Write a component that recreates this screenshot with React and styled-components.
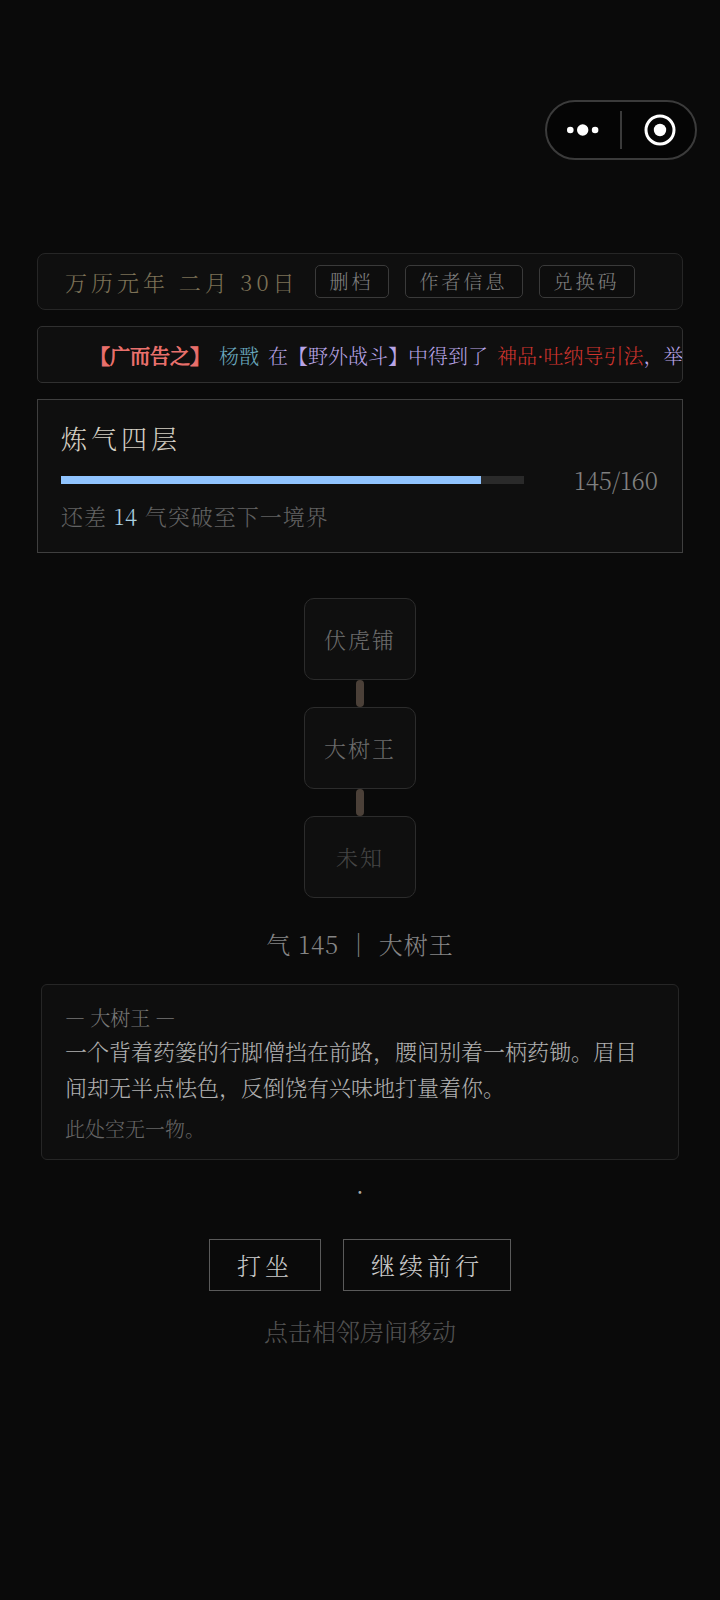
import styled, { createGlobalStyle } from "styled-components";

const GlobalStyle = createGlobalStyle`
  * {
    box-sizing: border-box;
  }

  body {
    margin: 0;
    background: #0a0a0a;
    color: #999;
    font-family: "Noto Serif CJK SC", "Noto Serif SC", "Liberation Serif", "Noto Sans CJK SC", serif;
    font-weight: 300;
  }

  button {
    font: inherit;
    margin: 0;
    cursor: pointer;
  }

  p, h1, h2 {
    margin: 0;
    font-weight: inherit;
  }
`;

const Page = styled.div`
  min-height: 100vh;
  padding: 100px 37px 48px;
  overflow: hidden;
`;

/* 右上角胶囊 */
const Capsule = styled.div`
  display: flex;
  align-items: center;
  width: 152px;
  height: 60px;
  margin: 0 -14px 93px auto;
  border: 2px solid #3b3b3b;
  border-radius: 30px;
  background: #050505;
`;

const CapsuleButton = styled.button`
  flex: 1;
  height: 100%;
  display: flex;
  align-items: center;
  justify-content: center;
  padding: 0;
  border: 0;
  background: none;
`;

const CapsuleLine = styled.span`
  width: 2px;
  height: 38px;
  background: #3b3b3b;
`;

const Panels = styled.div`
  display: flex;
  flex-direction: column;
  gap: 16px;
`;

const TopBar = styled.header`
  display: flex;
  align-items: center;
  gap: 16px;
  padding: 11px 27px;
  border: 1px solid #262626;
  border-radius: 8px;
  background: #0f0f0f;
`;

const GameDate = styled.span`
  font-size: 22px;
  line-height: 32px;
  letter-spacing: 4px;
  white-space: nowrap;
  color: #7d7257;
`;

const SmallButton = styled.button`
  padding: 0 14px 2px;
  border: 1px solid #3a3a3a;
  border-radius: 5px;
  background: #0d0d0d;
  color: #808080;
  font-size: 19px;
  line-height: 29px;
  letter-spacing: 3px;
  white-space: nowrap;
`;

const Notice = styled.div`
  display: flex;
  gap: 9px;
  padding: 13px 0 11px 52px;
  overflow: hidden;
  border: 1px solid #303030;
  border-radius: 5px;
  background: #0f0f0f;
  font-size: 20px;
  line-height: 31px;
  white-space: nowrap;
`;

const NoticeText = styled.span`
  flex-shrink: 0;
  color: ${({ $color }) => $color};
  -webkit-text-stroke: ${({ $bold }) => ($bold ? "1px" : "0")};
`;

const LevelCard = styled.section`
  padding: 22px 24px 22px 23px;
  border: 1px solid #3f3f3f;
  background: #0f0f0f;
`;

const LevelName = styled.h1`
  font-size: 26px;
  line-height: 32px;
  letter-spacing: 4px;
  color: #d4cfc4;
`;

const QiRow = styled.div`
  display: flex;
  align-items: center;
  margin-top: 12px;
`;

const Track = styled.div`
  flex: 1;
  height: 8px;
  background: #2a2a2a;
`;

const Fill = styled.div`
  height: 100%;
  background: #90c4ff;
`;

const QiCount = styled.span`
  min-width: 134px;
  text-align: right;
  font-size: 24px;
  line-height: 28px;
  color: #808080;
`;

const LevelHint = styled.p`
  margin-top: 8px;
  font-size: 22px;
  line-height: 28px;
  letter-spacing: 1px;
  color: #626262;

  b {
    font-weight: 300;
    color: #a9cfe0;
  }
`;

/* 房间地图 */
const RoomMap = styled.div`
  display: flex;
  flex-direction: column;
  align-items: center;
  margin-top: 45px;
`;

const Room = styled.button`
  width: 112px;
  height: 82px;
  padding: 0 0 2px;
  border: 1px solid #2c2c2c;
  border-radius: 10px;
  background: #0f0f0f;
  color: ${({ $unknown }) => ($unknown ? "#464646" : "#6c6c6c")};
  font-size: 22px;
  letter-spacing: 2px;
`;

const Path = styled.span`
  width: 8px;
  height: 27px;
  border-radius: 4px;
  background: #4b4038;
`;

const Status = styled.p`
  margin-top: 31px;
  text-align: center;
  font-size: 24px;
  line-height: 30px;
  letter-spacing: 1px;
  color: #858585;
`;

const Scene = styled.section`
  margin: 25px 4px 0;
  padding: 19px 23px 16px;
  border: 1px solid #262626;
  border-radius: 6px;
  background: #0e0e0e;
`;

const SceneName = styled.h2`
  font-size: 20px;
  line-height: 28px;
  color: #777;
`;

const SceneText = styled.p`
  margin-top: 1px;
  font-size: 22px;
  line-height: 36px;
  color: #b0b0b0;
`;

const SceneEmpty = styled.p`
  margin-top: 10px;
  font-size: 20px;
  line-height: 28px;
  color: #666;
`;

const Log = styled.p`
  margin-top: 16px;
  text-align: center;
  font-size: 24px;
  line-height: 30px;
  color: #aaa;
`;

const Actions = styled.div`
  display: flex;
  justify-content: center;
  gap: 22px;
  margin-top: 33px;
`;

const ActionButton = styled.button`
  padding: 10px 27px;
  border: 1px solid #5a5a5a;
  background: #0a0a0a;
  color: #ccc;
  font-size: 24px;
  line-height: 30px;
  letter-spacing: 4px;
`;

const MoveHint = styled.p`
  margin-top: 25px;
  text-align: center;
  font-size: 24px;
  line-height: 30px;
  color: #525252;
`;

const notice = [
  { text: "【广而告之】", color: "#e8706c", bold: true },
  { text: "杨戬", color: "#6aa9bf" },
  { text: "在【野外战斗】中得到了", color: "#b8a4e6" },
];

export default function App() {
  const qi = 145;
  const maxQi = 160;

  return (
    <>
      <GlobalStyle />
      <Page lang="zh-CN">
        <Capsule>
          <CapsuleButton aria-label="更多">
            <svg width="36" height="14" viewBox="0 0 36 14" fill="#fff">
              <circle cx="4.3" cy="7" r="3.3" />
              <circle cx="16.7" cy="7" r="5.7" />
              <circle cx="29.1" cy="7" r="3.3" />
            </svg>
          </CapsuleButton>
          <CapsuleLine />
          <CapsuleButton aria-label="关闭">
            <svg width="34" height="32" viewBox="0 0 34 32">
              <circle cx="18" cy="16" r="14" fill="none" stroke="#fff" strokeWidth="3" />
              <circle cx="18" cy="16" r="6.2" fill="#fff" />
            </svg>
          </CapsuleButton>
        </Capsule>

        <Panels>
          <TopBar>
            <GameDate>万历元年 二月 30日</GameDate>
            <SmallButton>删档</SmallButton>
            <SmallButton>作者信息</SmallButton>
            <SmallButton>兑换码</SmallButton>
          </TopBar>

          <Notice>
            {notice.map((n) => (
              <NoticeText key={n.text} $color={n.color} $bold={n.bold}>
                {n.text}
              </NoticeText>
            ))}
            <NoticeText $color="#b8a4e6">
              <NoticeText $color="#d0342e">神品·吐纳导引法</NoticeText>，举
            </NoticeText>
          </Notice>

          <LevelCard>
            <LevelName>炼气四层</LevelName>
            <QiRow>
              <Track>
                <Fill style={{ width: `${(qi / maxQi) * 100}%` }} />
              </Track>
              <QiCount>
                {qi}/{maxQi}
              </QiCount>
            </QiRow>
            <LevelHint>
              还差 <b>14</b> 气突破至下一境界
            </LevelHint>
          </LevelCard>
        </Panels>

        <RoomMap>
          <Room>伏虎铺</Room>
          <Path />
          <Room>大树王</Room>
          <Path />
          <Room $unknown>未知</Room>
        </RoomMap>

        <Status>气 {qi} ｜ 大树王</Status>

        <Scene>
          <SceneName>— 大树王 —</SceneName>
          <SceneText>
            一个背着药篓的行脚僧挡在前路，腰间别着一柄药锄。眉目间却无半点怯色，反倒饶有兴味地打量着你。
          </SceneText>
          <SceneEmpty>此处空无一物。</SceneEmpty>
        </Scene>

        <Log>·</Log>

        <Actions>
          <ActionButton>打坐</ActionButton>
          <ActionButton>继续前行</ActionButton>
        </Actions>
        <MoveHint>点击相邻房间移动</MoveHint>
      </Page>
    </>
  );
}
